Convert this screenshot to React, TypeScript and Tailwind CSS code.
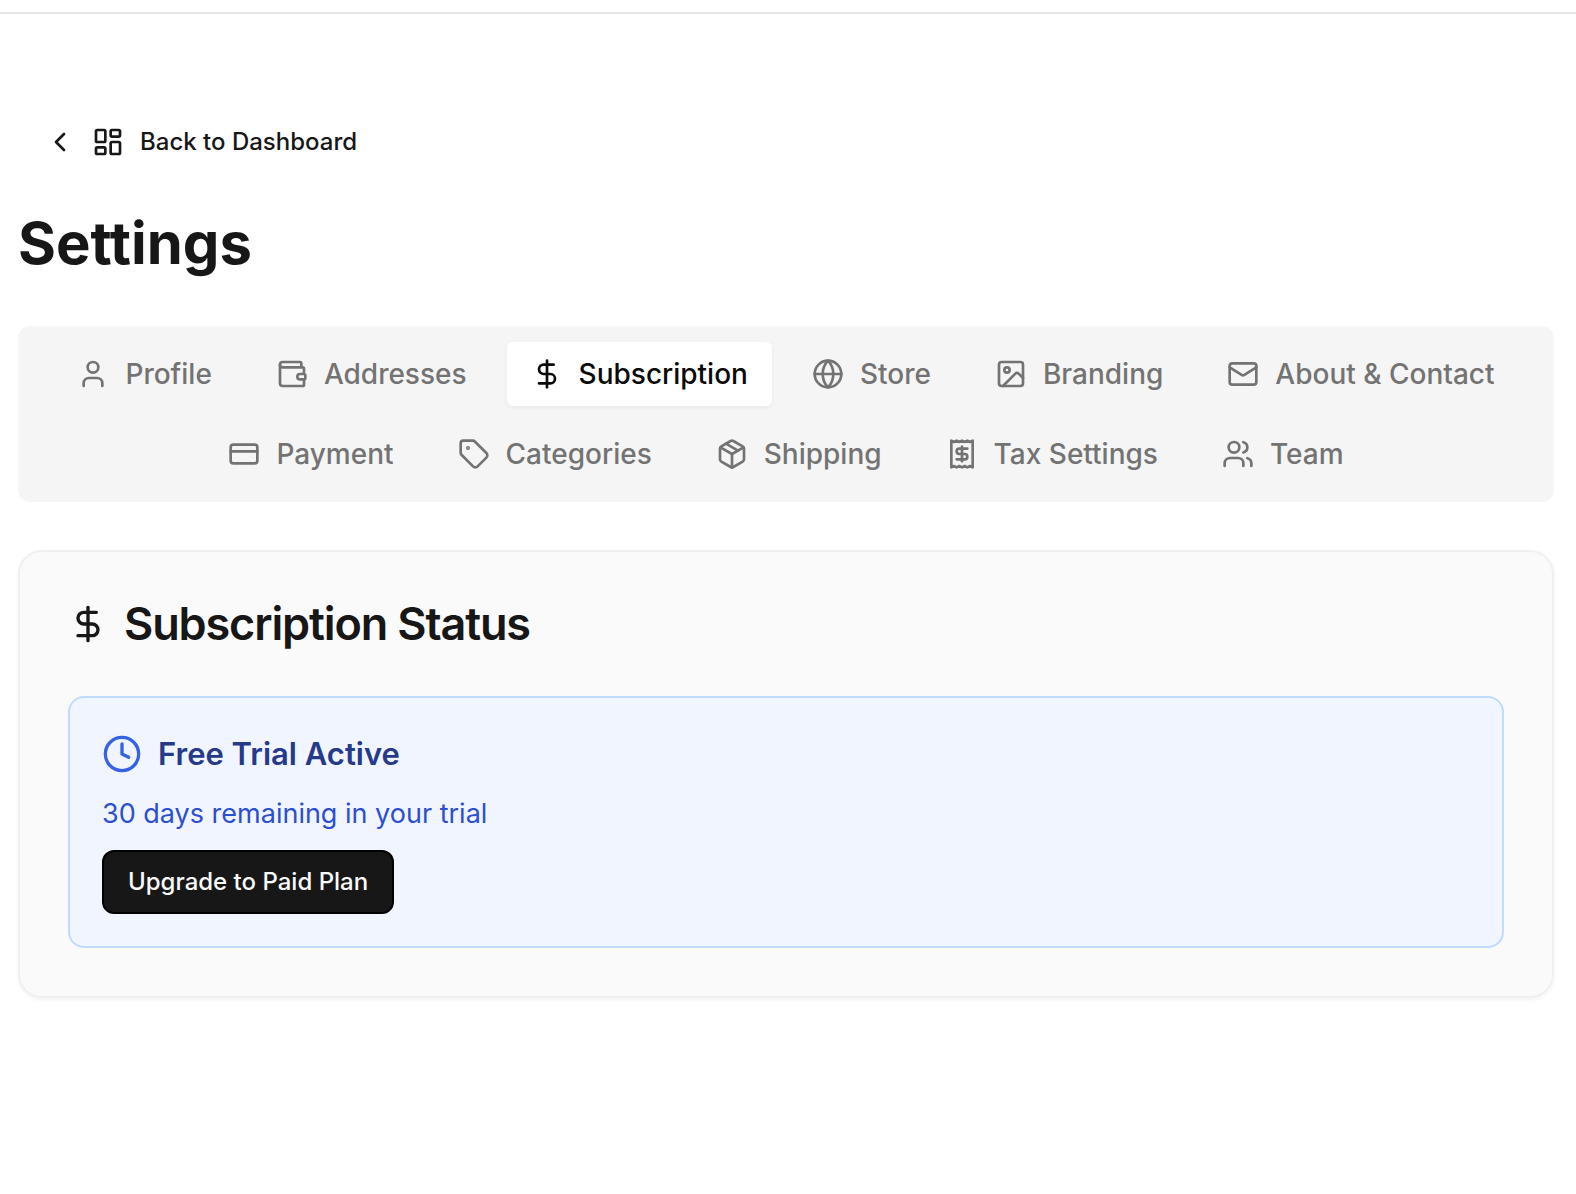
import React from "react";
import {
  ChevronLeft,
  Clock,
  CreditCard,
  DollarSign,
  Globe,
  Image,
  LayoutDashboard,
  Mail,
  Package,
  Receipt,
  Tag,
  User,
  Users,
  Wallet,
} from "lucide-react";

const tabs = [
  { label: "Profile", icon: User },
  { label: "Addresses", icon: Wallet },
  { label: "Subscription", icon: DollarSign, active: true },
  { label: "Store", icon: Globe },
  { label: "Branding", icon: Image },
  { label: "About & Contact", icon: Mail },
  { label: "Payment", icon: CreditCard },
  { label: "Categories", icon: Tag },
  { label: "Shipping", icon: Package },
  { label: "Tax Settings", icon: Receipt },
  { label: "Team", icon: Users },
];

export default function App() {
  return (
    <div className="min-h-screen bg-white font-['Inter',sans-serif] text-[#171717]">
      <header className="h-[14px] border-b-2 border-neutral-200" />
      <main className="flex flex-col pt-24 pr-[22px] pb-24 pl-[18px]">
        <a
          href="#dashboard"
          className="flex h-16 items-center gap-4 self-start rounded-xl border-2 border-transparent px-6 text-2xl font-medium"
        >
          <ChevronLeft size={32} />
          <LayoutDashboard size={32} />
          Back to Dashboard
        </a>
        <h1 className="mt-8 text-[58px] leading-[74px] font-bold">Settings</h1>
        <div role="tablist" className="mt-[46px] flex flex-wrap justify-center gap-4 rounded-xl bg-[#f5f5f5] p-4">
          {tabs.map(({ label, icon: Icon, active }) => (
            <button
              key={label}
              type="button"
              role="tab"
              aria-selected={!!active}
              className={
                active
                  ? "flex h-16 items-center gap-4 rounded-md bg-white px-6 text-[28px] font-medium text-[#0a0a0a] shadow-[0_2px_4px_rgba(0,0,0,0.05)]"
                  : "flex h-16 items-center gap-4 rounded-md px-6 text-[28px] font-medium text-[#737373]"
              }
            >
              <Icon size={32} />
              {label}
            </button>
          ))}
        </div>
        <section className="mt-12 rounded-3xl border-2 border-[#f0f0f0] bg-[#fafafa] p-12 shadow-[0_2px_4px_rgba(0,0,0,0.05)]">
          <h2 className="flex items-center gap-4 text-[45px] leading-[48px] font-semibold tracking-tight">
            <DollarSign size={40} />
            Subscription Status
          </h2>
          <div className="mt-12 flex flex-col items-start rounded-2xl border-2 border-[#bfdbfe] bg-[#f0f5ff] p-8">
            <h3 className="flex items-center gap-4 text-[31px] leading-[48px] font-semibold text-[#263a8a]">
              <Clock size={40} className="text-[#3662e3]" />
              Free Trial Active
            </h3>
            <p className="mt-4 text-[27px] leading-[40px] text-[#2c4fd0]">30 days remaining in your trial</p>
            <button
              type="button"
              className="mt-4 h-16 rounded-xl border-2 border-black bg-[#171717] px-6 text-2xl font-medium text-[#fafafa]"
            >
              Upgrade to Paid Plan
            </button>
          </div>
        </section>
      </main>
    </div>
  );
}
